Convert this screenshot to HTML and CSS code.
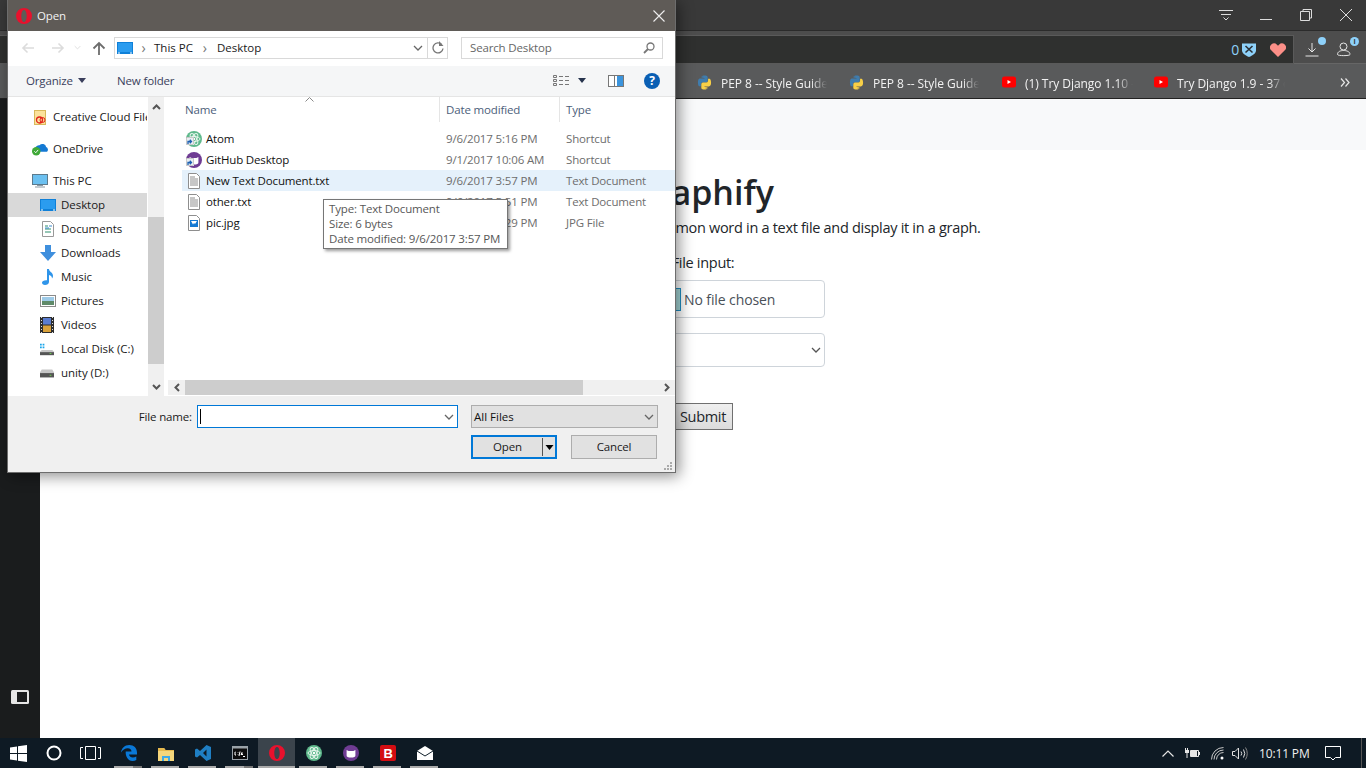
FILE: index.html
```html
<!DOCTYPE html>
<html lang="en">
<head>
<meta charset="utf-8">
<title>Open</title>
<link rel="stylesheet" href="styles.css">
</head>
<body>
<svg class="defs" width="0" height="0" aria-hidden="true">
  <symbol id="opera" viewBox="0 0 16 16"><path fill="#e8112d" fill-rule="evenodd" d="M8 0a8 8 0 1 0 0 16A8 8 0 0 0 8 0zm0 2c1.700 0 2.700 2.700 2.700 6s-1 6-2.700 6-2.700-2.700-2.700-6 1-6 2.700-6z"/></symbol>
  <symbol id="python" viewBox="0 0 16 16"><path fill="#3f7cad" d="M7.900.5C4.800.5 5 1.800 5 1.800v1.500h3v.5H3.300S1 3.500 1 7.900s2 4.200 2 4.200h1.200v-2s-.1-2.100 2-2.100h3.200s2 0 2-1.900V2.500S11.700.5 7.900.5zM6.200 1.500a.6.6 0 1 1 0 1.200.6.6 0 0 1 0-1.200z"/><path fill="#f7cf47" d="M8.100 15.500c3.100 0 2.900-1.300 2.900-1.300v-1.500H8v-.5h4.700S15 12.500 15 8.100s-2-4.200-2-4.200h-1.200v2s.1 2.100-2 2.100H6.600s-2 0-2 1.900v3.600s-.3 2 3.500 2zm1.700-1a.6.6 0 1 1 0-1.200.6.6 0 0 1 0 1.200z"/></symbol>
  <symbol id="yt" viewBox="0 0 14 12"><rect width="14" height="11" y=".5" rx="2.500" fill="#f00"/><path fill="#fff" d="M5.500 4v4L9 6z"/></symbol>
  <symbol id="doc" viewBox="0 0 16 16"><path fill="#fff" stroke="#8e8e8e" d="M2.500.5h8l3 3v12h-11z"/><path stroke="#8e8e8e" d="M4 4h5M4 6h8M4 8h8M4 10h8M4 12h8"/></symbol>
  <symbol id="folder-mon" viewBox="0 0 16 12"><rect width="16" height="12" fill="#0f80d8"/><rect x="1" y="1" width="14" height="9" fill="#2b9cef"/><path fill="#fff" d="M1 10.500h2v1H1zM13 10.500h2v1h-2z"/></symbol>
  <symbol id="shortcut" viewBox="0 0 8 8"><rect width="8" height="8" fill="#fff"/><rect x=".5" y=".5" width="7" height="7" fill="#e9eef2" stroke="#aaa" stroke-width=".6"/><path fill="none" stroke="#1c5fb0" stroke-width="1.300" d="M2 7V4.500h3M3.800 2.800L5.500 4.500 3.800 6.200"/></symbol>
  <symbol id="atom" viewBox="0 0 16 16"><circle cx="8" cy="8" r="8" fill="#5fb98c"/><g fill="none" stroke="#e5f5ec"><ellipse cx="8" cy="8" rx="6" ry="2.500"/><ellipse cx="8" cy="8" rx="6" ry="2.500" transform="rotate(60 8 8)"/><ellipse cx="8" cy="8" rx="6" ry="2.500" transform="rotate(120 8 8)"/></g><circle cx="8" cy="8" r="1.200" fill="#fff"/></symbol>
  <symbol id="ghd" viewBox="0 0 16 16"><circle cx="8" cy="8" r="8" fill="#6f3c93"/><path fill="#fff" d="M3.600 5l2 1h4.800l2-1v5.500c0 1.500-1.500 2-4.400 2s-4.400-.5-4.400-2z"/></symbol>
  <symbol id="chev-d" viewBox="0 0 10 6"><path fill="none" stroke="currentColor" stroke-width="1.300" d="M1 1l4 4 4-4"/></symbol>
  <symbol id="chev-b" viewBox="0 0 8 5"><path fill="currentColor" d="M0 0h8L4 5z"/></symbol>
  <symbol id="arrow-l" viewBox="0 0 14 12"><path fill="none" stroke="currentColor" stroke-width="1.600" d="M13 6H2M6.500 1.500L2 6l4.500 4.500"/></symbol>
  <symbol id="arrow-r" viewBox="0 0 14 12"><path fill="none" stroke="currentColor" stroke-width="1.600" d="M1 6h11M7.500 1.500L12 6l-4.500 4.500"/></symbol>
</svg>

<div class="desktop">
  <div class="browser">
    <header class="chrome">
      <div class="titlebar">
        <svg class="win-ico" width="16" height="12" viewBox="0 0 16 12"><path fill="none" stroke="#ddd" d="M1 1.500h14M3 5.500h10"/><path fill="none" stroke="#ddd" d="M5.500 8.500L8 11l2.500-2.500"/></svg>
        <svg class="win-ico" width="14" height="12" viewBox="0 0 14 12"><path stroke="#ddd" d="M1 10.500h12"/></svg>
        <svg class="win-ico" width="14" height="14" viewBox="0 0 14 14"><path fill="none" stroke="#ddd" d="M1.500 3.500h9v9h-9zM4 3.500v-2h8.500V10h-2"/></svg>
        <svg class="win-ico" width="14" height="14" viewBox="0 0 14 14"><path stroke="#ddd" d="M1 1l12 12M13 1L1 13"/></svg>
      </div>
      <div class="addrrow">
        <div class="addrbox">
          <span class="blocked">0</span>
          <svg width="14" height="15" viewBox="0 0 14 15"><path fill="#8ed1fa" d="M0 1.500h14v7c0 3-3.500 5-7 6.500-3.500-1.500-7-3.500-7-6.500z"/><path stroke="#2a3036" stroke-width="1.600" d="M3.500 4l7 6.500M10.500 4l-7 6.500"/></svg>
          <svg class="heart" width="16" height="14" viewBox="0 0 16 14"><path fill="#fc8f88" d="M8 14L1.200 7.300A4 4 0 0 1 7 1.700L8 2.700l1-1a4 4 0 0 1 5.800 5.600z"/></svg>
        </div>
        <div class="toolbtn">
          <svg width="14" height="15" viewBox="0 0 14 15"><path fill="none" stroke="#e6e6e6" d="M7 1v9M3.500 6.500L7 10l3.500-3.500M.5 14h13"/></svg>
          <span class="dot"></span>
        </div>
        <div class="toolbtn second">
          <svg width="14" height="15" viewBox="0 0 14 15"><g fill="none" stroke="#e6e6e6"><circle cx="6.500" cy="4.500" r="3.500"/><path d="M.5 12.500c0-3 3-4 6-4s6.500 1 6.500 4c0 1.500-12.500 1.500-12.500 0z"/></g></svg>
          <span class="dot info">i</span>
        </div>
      </div>
      <div class="bookmarks">
        <a class="bm bm-pep"><svg width="15" height="15"><use href="#python"/></svg><span class="bm-t">PEP 8 -- Style Guide for Python</span></a>
        <a class="bm bm-pep"><svg width="15" height="15"><use href="#python"/></svg><span class="bm-t">PEP 8 -- Style Guide for Python</span></a>
        <a class="bm bm-yt"><svg width="14" height="12"><use href="#yt"/></svg><span class="bm-t">(1) Try Django 1.10 - 37 of</span></a>
        <a class="bm bm-yt"><svg width="14" height="12"><use href="#yt"/></svg><span class="bm-t">Try Django 1.9 - 37 of 38</span></a>
        <svg class="more" width="10" height="9" viewBox="0 0 10 9"><path fill="none" stroke="#e6e6e6" stroke-width="1.200" d="M1 .5l3.500 4L1 8.500M5.500 .5l3.500 4-3.500 4"/></svg>
      </div>
    </header>
    <div class="browser-body">
      <aside class="side">
        <svg width="18" height="14" viewBox="0 0 18 14"><rect width="18" height="14" rx="1.500" fill="#e6e6e6"/><rect x="6" y="2" width="10" height="10" fill="#1a1c1d"/></svg>
      </aside>
      <main class="page">
        <div class="strip"></div>
        <div class="content">
          <h1 class="title">Graphify</h1>
          <p class="lead">Use this program to find the most common word in a text file and display it in a graph.</p>
          <div class="label">File input:</div>
          <div class="field file"><span class="choose">Choose File</span><span class="nofile">No file chosen</span></div>
          <div class="field select"><svg width="10" height="6"><use href="#chev-d"/></svg></div>
          <span class="submit">Submit</span>
        </div>
      </main>
    </div>
  </div>

  <footer class="taskbar">
    <div class="tb-app sys"><svg width="17" height="17" viewBox="0 0 17 17"><path fill="#fff" d="M0 2.500l7-1v6.500H0zM8 1.300L17 0v8H8zM0 9h7v6.500l-7-1zM8 9h9v8l-9-1.300z"/></svg></div>
    <div class="tb-app sys"><svg width="16" height="16" viewBox="0 0 16 16"><circle cx="8" cy="8" r="6.500" fill="none" stroke="#fff" stroke-width="2"/></svg></div>
    <div class="tb-app sys"><svg width="21" height="14" viewBox="0 0 21 14"><path fill="none" stroke="#fff" d="M5.500.5h10v13h-10zM3 1.500H.5v11H3M18 1.500h2.500v11H18"/></svg></div>
    <div class="tb-app spacer"></div>
    <div class="tb-app"><svg width="16" height="16" viewBox="0 0 16 16"><path fill="#0a78d7" d="M8.300 0C3.500 0 .5 3.500 0 7.500 1.500 5 4 3.300 6.800 3.300c2.300 0 3.700 1.300 3.700 3.200H4.700C4.300 11 7 16 11.500 16c1.500 0 2.700-.3 3.800-.9v-3.600c-3 1.700-6.800 1.200-7.300-1.900h8V7.500C16 3 12.900 0 8.300 0z"/></svg><i class="run split"></i></div>
    <div class="tb-app"><svg width="16" height="15" viewBox="0 0 16 15"><path fill="#f5d67b" d="M0 2h6l1.500 2H16v11H0z"/><path fill="#e6b94e" d="M0 2h6l1.500 2H16v1H0z"/><path fill="#3ea9e8" d="M4 10h8v5h-2v-3H6v3H4z"/></svg><i class="run"></i></div>
    <div class="tb-app"><svg width="16" height="16" viewBox="0 0 16 16"><path fill="#1f7fc4" d="M11.500 0L16 2v12l-4.500 2L5 10l-3 2.500L0 11.500v-7L2 3.500 5 6zM11.500 4.500L8 8l3.500 3.500z"/></svg><i class="run"></i></div>
    <div class="tb-app"><svg width="16" height="14" viewBox="0 0 16 14"><rect width="16" height="14" fill="#9aa2a8"/><rect x="1" y="2.500" width="14" height="10.500" fill="#0c0c0c"/><path fill="none" stroke="#fff" d="M3.500 6H3v3h1M6 6.500v.5M6 8.500V9M8 5.500L7 10M10 8.500v-2l-1 2h2M11 10.500h2"/></svg><i class="run split"></i></div>
    <div class="tb-app active"><svg width="16" height="16"><use href="#opera"/></svg><i class="run"></i></div>
    <div class="tb-app"><svg width="16" height="16"><use href="#atom"/></svg><i class="run"></i></div>
    <div class="tb-app"><svg width="16" height="16"><use href="#ghd"/></svg><i class="run"></i></div>
    <div class="tb-app"><svg width="16" height="16" viewBox="0 0 16 16"><rect width="16" height="16" rx="2" fill="#d40d12"/><text x="8" y="13" class="b-letter" text-anchor="middle">B</text></svg><i class="run"></i></div>
    <div class="tb-app"><svg width="16" height="14" viewBox="0 0 16 14"><path fill="#fff" d="M0 5l8-5 8 5v9H0z"/><path fill="none" stroke="#10202c" d="M0 5l8 5 8-5"/></svg><i class="run"></i></div>
    <div class="tray">
      <svg class="t-chev" width="12" height="7" viewBox="0 0 12 7"><path fill="none" stroke="#e6e6e6" stroke-width="1.200" d="M.5 6.500L6 1l5.500 5.500"/></svg>
      <svg class="t-batt" width="16" height="10" viewBox="0 0 16 10"><path fill="#e6e6e6" d="M1 0h1v2h1V0h1v2h1v3H3.500v5h-1V5H1z"/><path fill="none" stroke="#e6e6e6" d="M6.500 2.500h8v6h-8z"/><rect x="7" y="3" width="6" height="5" fill="#e6e6e6"/><rect x="15" y="4" width="1" height="3" fill="#e6e6e6"/></svg>
      <svg class="t-wifi" width="13" height="13" viewBox="0 0 13 13"><g fill="none" stroke="#c9c9c9"><path d="M.5 12.500a12 12 0 0 1 12-12"/><path d="M3 12.500a9.500 9.500 0 0 1 9.500-9.500"/><path d="M5.500 12.500a7 7 0 0 1 7-7"/></g><circle cx="11" cy="11" r="1.500" fill="#fff"/></svg>
      <svg class="t-vol" width="16" height="13" viewBox="0 0 16 13"><path fill="none" stroke="#e0e0e0" d="M.5 4.500h2.500L6.500 1v11L3 8.500H.5zM9 4.500q1.500 2 0 4M11.500 2.500q2.500 4 0 8"/><path fill="none" stroke="#888" d="M13.500 .5q3.500 6 0 12"/></svg>
      <span class="clock">10:11 PM</span>
      <svg class="notif" width="16" height="15" viewBox="0 0 16 15"><path fill="none" stroke="#fff" d="M.5.500h15v11h-5L8 14l-2.500-2.500h-5z"/></svg>
      <i class="show-desk"></i>
    </div>
  </footer>

  <section class="dialog">
    <div class="dlg-title">
      <svg width="16" height="16"><use href="#opera"/></svg>
      <span class="dlg-name">Open</span>
      <svg class="dlg-close" width="12" height="12" viewBox="0 0 12 12"><path stroke="#eee" stroke-width="1.100" d="M.5.500l11 11M11.500.500l-11 11"/></svg>
    </div>
    <div class="navrow">
      <svg class="nav-a" width="14" height="12"><use href="#arrow-l"/></svg>
      <svg class="nav-b" width="14" height="12"><use href="#arrow-r"/></svg>
      <svg class="nav-c" width="7" height="5"><use href="#chev-d"/></svg>
      <svg class="nav-d" width="14" height="14" viewBox="0 0 14 14"><path fill="none" stroke="#6d6d6d" stroke-width="1.800" d="M7 14V2M1.500 7.500L7 2l5.500 5.500"/></svg>
      <div class="crumbs">
        <svg width="16" height="12"><use href="#folder-mon"/></svg>
        <span class="sep">&rsaquo;</span><span>This PC</span><span class="sep sep-2">&rsaquo;</span><span>Desktop</span>
        <svg class="crumb-dd" width="10" height="6"><use href="#chev-d"/></svg>
        <span class="crumb-ref"><svg width="12" height="13" viewBox="0 0 12 13"><path fill="none" stroke="#777" stroke-width="1.300" d="M9.700 3.500a5 5 0 1 0 1.300 4"/><path fill="#777" d="M7 0v5h4.500z"/></svg></span>
      </div>
      <div class="search">
        <span>Search Desktop</span>
        <svg width="12" height="12" viewBox="0 0 12 12"><circle cx="7.500" cy="4.500" r="3.500" fill="none" stroke="#777" stroke-width="1.300"/><path stroke="#777" stroke-width="1.800" d="M5 7l-4 4"/></svg>
      </div>
    </div>
    <div class="cmdbar">
      <span class="cmd">Organize</span>
      <svg class="cmd-arrow" width="8" height="5"><use href="#chev-b"/></svg>
      <span class="cmd-new">New folder</span>
      <svg class="views" width="16" height="12" viewBox="0 0 16 12"><path fill="none" stroke="#777" d="M.5.500h3v2h-3zM.5 4.500h3v2h-3zM.5 8.500h3v2h-3z"/><path stroke="#777" d="M6 1.500h4M12 1.500h4M6 5.500h4M12 5.500h4M6 9.500h4M12 9.500h4"/></svg>
      <svg class="view-arrow" width="8" height="5"><use href="#chev-b"/></svg>
      <svg class="pane" width="16" height="12" viewBox="0 0 16 12"><rect x=".5" y=".5" width="15" height="11" fill="#fff" stroke="#777"/><rect x="9" y="1" width="6" height="10" fill="#3b94dd"/><path stroke="#777" d="M6.500 0v12"/></svg>
      <span class="help">?</span>
    </div>
    <div class="panes">
      <nav class="tree">
        <div class="tree-list">
          <div class="tree-row top cc"><svg width="12" height="15" viewBox="0 0 12 15"><rect x=".5" y=".5" width="11" height="14" fill="#fbe29c" stroke="#d9b95b"/><circle cx="5.500" cy="10" r="3" fill="none" stroke="#e2231a" stroke-width="1.300"/><circle cx="8.500" cy="10" r="2.500" fill="none" stroke="#e2231a"/></svg><span>Creative Cloud Files</span></div>
          <div class="tree-row top group"><svg width="16" height="14" viewBox="0 0 17 14"><path fill="#1479d3" d="M4 9a4 4 0 0 1 4-6 4 4 0 0 1 7 2 3 3 0 0 1 1 5H5z"/><circle cx="4.500" cy="9.500" r="4.500" fill="#3fa938"/><path fill="none" stroke="#fff" d="M2.500 9.500l1.500 1.500 2.500-3"/></svg><span>OneDrive</span></div>
          <div class="tree-row top group"><svg width="16" height="14" viewBox="0 0 16 14"><rect x=".5" y=".5" width="15" height="10" fill="#6cc0f0" stroke="#5d7a8c"/><path fill="#8b9aa4" d="M5 11h6v1H5zM3 12.500h10v1H3z"/></svg><span>This PC</span></div>
          <div class="tree-row sel"><svg width="16" height="12"><use href="#folder-mon"/></svg><span>Desktop</span></div>
          <div class="tree-row"><svg width="16" height="16" viewBox="0 0 16 16"><path fill="#fff" stroke="#999" d="M2.500.5h8l3 3v12h-11z"/><path stroke="#2f8f6f" d="M5 5h3M5 8h6M5 11h6"/><path stroke="#3d8ad0" d="M9 5h3M5 7h4"/></svg><span>Documents</span></div>
          <div class="tree-row"><svg width="16" height="16" viewBox="0 0 16 16"><path fill="#3f8fdd" d="M5 0h6v7h5l-8 9-8-9h5z"/></svg><span>Downloads</span></div>
          <div class="tree-row"><svg width="16" height="16" viewBox="0 0 16 16"><path fill="#2f95ea" d="M7 0h2c0 3 4 3 4 7 0 1-.5 2-1 2.500 0-2-1-3-3-3.500v7c0 2-2 3-4 3S2 15 2 13.500 4 11 7 11.200z"/></svg><span>Music</span></div>
          <div class="tree-row"><svg width="16" height="12" viewBox="0 0 16 12"><rect x=".5" y=".5" width="15" height="11" fill="#fff" stroke="#8a8a8a"/><rect x="2" y="2" width="12" height="4" fill="#9ecbe8"/><rect x="2" y="6" width="12" height="4" fill="#5f8a69"/></svg><span>Pictures</span></div>
          <div class="tree-row"><svg width="14" height="16" viewBox="0 0 14 16"><rect width="14" height="16" fill="#2d2d2d"/><rect x="3" y="1" width="8" height="6.500" fill="#5a7ccf"/><rect x="3" y="8.500" width="8" height="6.500" fill="#d9a13a"/><path stroke="#ddd" stroke-dasharray="1 2" d="M1.500 0v16M12.500 0v16"/></svg><span>Videos</span></div>
          <div class="tree-row"><svg width="14" height="13" viewBox="0 0 16 13"><path fill="#19a5ea" d="M0 0h2v2H0zM3 0h2v2H3zM0 3h2v2H0zM3 3h2v2H3z"/><path fill="#c6c6c6" d="M2 7h12l2 2v1H0V9z"/><rect y="9.500" width="16" height="3.500" fill="#555"/><rect x="11" y="10.500" width="2" height="1" fill="#6fdc4f"/></svg><span>Local Disk (C:)</span></div>
          <div class="tree-row"><svg width="14" height="9" viewBox="0 0 16 9"><path fill="#c6c6c6" d="M2 0h12l2 3v1H0V3z"/><rect y="4" width="16" height="5" fill="#555"/><rect x="11" y="6" width="2" height="1" fill="#6fdc4f"/></svg><span>unity (D:)</span></div>
        </div>
        <div class="vscroll">
          <svg width="9" height="6" viewBox="0 0 9 6"><path fill="none" stroke="#555" stroke-width="2" d="M1 5l3.500-3.500L8 5"/></svg>
          <div class="vtrack"><div class="vthumb"></div></div>
          <svg width="9" height="6" viewBox="0 0 9 6"><path fill="none" stroke="#555" stroke-width="2" d="M1 1l3.500 3.500L8 1"/></svg>
        </div>
      </nav>
      <div class="files">
        <div class="file-head">
          <svg class="sort" width="9" height="5" viewBox="0 0 9 5"><path fill="none" stroke="#888" d="M.5 4.500l4-4 4 4"/></svg>
          <span class="col-name">Name</span><span class="col-date">Date modified</span><span class="col-type">Type</span>
        </div>
        <div class="file-list">
          <div class="file-row"><span class="col-name ico-wrap"><svg width="16" height="16"><use href="#atom"/></svg><svg class="sc" width="8" height="8"><use href="#shortcut"/></svg>Atom</span><span class="col-date">9/6/2017 5:16 PM</span><span class="col-type">Shortcut</span></div>
          <div class="file-row"><span class="col-name ico-wrap"><svg width="16" height="16"><use href="#ghd"/></svg><svg class="sc" width="8" height="8"><use href="#shortcut"/></svg>GitHub Desktop</span><span class="col-date">9/1/2017 10:06 AM</span><span class="col-type">Shortcut</span></div>
          <div class="file-row selected"><span class="col-name ico-wrap"><svg width="16" height="16"><use href="#doc"/></svg>New Text Document.txt</span><span class="col-date">9/6/2017 3:57 PM</span><span class="col-type">Text Document</span></div>
          <div class="file-row"><span class="col-name ico-wrap"><svg width="16" height="16"><use href="#doc"/></svg>other.txt</span><span class="col-date">9/6/2017 5:51 PM</span><span class="col-type">Text Document</span></div>
          <div class="file-row"><span class="col-name ico-wrap"><svg width="16" height="16" viewBox="0 0 16 16"><path fill="#fff" stroke="#8e8e8e" d="M2.500.5h8l3 3v12h-11z"/><rect x="4" y="5" width="8" height="7" fill="#1479d3"/><path fill="#fff" d="M5 6h6l-2 3-1-1-1 1.500z"/></svg>pic.jpg</span><span class="col-date">9/6/2017 5:29 PM</span><span class="col-type">JPG File</span></div>
        </div>
        <div class="hscroll">
          <svg width="6" height="9" viewBox="0 0 6 9"><path fill="none" stroke="#555" stroke-width="2" d="M5 1L1.500 4.500 5 8"/></svg>
          <div class="hthumb"></div>
          <svg class="h-right" width="6" height="9" viewBox="0 0 6 9"><path fill="none" stroke="#555" stroke-width="2" d="M1 1l3.500 3.500L1 8"/></svg>
        </div>
      </div>
    </div>
    <div class="dlg-foot">
      <div class="foot-row">
        <span class="fname-label">File name:</span>
        <div class="fname"><i class="caret"></i><svg width="10" height="6"><use href="#chev-d"/></svg></div>
        <div class="ftype"><span>All Files</span><svg width="10" height="6"><use href="#chev-d"/></svg></div>
      </div>
      <div class="foot-row btns">
        <div class="btn open"><span class="open-t">Open</span><span class="open-dd"><svg width="9" height="5"><use href="#chev-b"/></svg></span></div>
        <div class="btn"><span class="btn-t">Cancel</span></div>
      </div>
      <svg class="grip" width="8" height="8" viewBox="0 0 8 8"><path fill="#aaa" d="M6 0h2v2H6zM3 3h2v2H3zM6 3h2v2H6zM0 6h2v2H0zM3 6h2v2H3zM6 6h2v2H6z"/></svg>
    </div>
    <div class="tooltip">
      <div>Type: Text Document</div>
      <div>Size: 6 bytes</div>
      <div>Date modified: 9/6/2017 3:57 PM</div>
    </div>
  </section>
</div>
</body>
</html>
```

FILE: styles.css
```css
* { box-sizing: border-box; }
html, body { margin: 0; padding: 0; height: 100%; overflow: hidden; }
body { font-family: "Open Sans", "Noto Sans", sans-serif; font-size: 11.5px; letter-spacing: -.15px; color: #1a1a1a; background: #fff; }
.defs { position: absolute; }
svg { display: block; flex: none; }

.desktop { position: relative; width: 1366px; height: 768px; overflow: hidden; display: flex; flex-direction: column; }
.browser { height: 738px; display: flex; flex-direction: column; }

.chrome { height: 99px; flex: none; display: flex; flex-direction: column; border-bottom: 1px solid #222; }
.titlebar { height: 31px; background: #393939; border-bottom: 1px solid #2b2b2b; display: flex; align-items: center; justify-content: flex-end; padding-right: 13px; gap: 26px; }
.win-ico:first-child { margin-right: -1px; }
.addrrow { height: 33px; background: #4d4d4d; border-bottom: 1px solid #666; display: flex; align-items: flex-start; padding-top: 4px; }
.addrbox { width: 1294px; height: 29px; background: #2f302f; border: 1px solid #5a5a5a; border-left: 0; display: flex; align-items: center; justify-content: flex-end; padding-right: 7px; color: #8ed1fa; }
.blocked { font-size: 14px; margin-right: 3px; }
.heart { margin-left: 14px; }
.toolbtn { position: relative; width: 32px; height: 29px; display: flex; align-items: center; justify-content: center; margin-left: 2px; }
.toolbtn.second { margin-left: 0; }
.dot { position: absolute; right: 2px; top: 2px; width: 8px; height: 8px; border-radius: 50%; background: #8ed1fa; font-size: 7px; line-height: 8px; text-align: center; color: #333; font-weight: 700; }
.info { right: 1px; width: 9px; height: 9px; line-height: 9px; }

.bookmarks { flex: 1; background: #595a5b; display: flex; align-items: center; position: relative; padding: 2px 0 0 696px; color: #f2f2f2; }
.bm { display: flex; align-items: center; flex: none; width: 152px; }
.bm svg { margin-left: 1px; margin-right: 9px; }
.bm-yt svg { margin-left: 2px; margin-right: 9px; }
.bm-t { white-space: nowrap; overflow: hidden; width: 106px; padding-top: 2px; font-size: 12px; letter-spacing: -.05px; -webkit-mask-image: linear-gradient(90deg, #000 85%, transparent); mask-image: linear-gradient(90deg, #000 85%, transparent); }
.bm-yt .bm-t { width: 108px; }
.more { margin-left: 36px; }

.browser-body { flex: 1; display: flex; min-height: 0; }
.side { width: 40px; flex: none; background: #1a1c1d; display: flex; flex-direction: column; justify-content: flex-end; align-items: center; padding-bottom: 34px; }
.page { flex: 1; background: #fff; font-size: 14.5px; letter-spacing: -.3px; color: #212529; }
.strip { height: 51px; background: #f8f9fa; }
.content { display: flex; flex-direction: column; align-items: center; padding-top: 18px; }
.title { margin: 0; font-size: 34px; line-height: 48px; font-weight: 600; letter-spacing: 0; }
.lead { margin: 0; line-height: 24px; }
.label { margin-top: 11px; line-height: 24px; }
.field { width: 244px; border: 1px solid #ced4da; border-radius: 4px; background: #fff; display: flex; align-items: center; }
.file { height: 38px; margin-top: 5px; padding-left: 12px; font-size: 14px; color: #495057; letter-spacing: -.1px; }
.choose { width: 87px; height: 23px; background: #a8dadb; border: 1px solid #1f8fc4; line-height: 21px; text-align: center; font-size: 13px; margin-right: 3px; white-space: nowrap; }
.select { height: 34px; margin-top: 15px; justify-content: flex-end; padding-right: 3px; color: #555; }
.submit { margin-top: 36px; width: 60px; height: 27px; border: 1px solid #707070; background: linear-gradient(#efefef, #dcdcdc); text-align: center; line-height: 25px; }

.taskbar { height: 30px; flex: none; background: #0e1a24; display: flex; color: #fff; }
.tb-app { width: 37px; height: 30px; position: relative; display: flex; align-items: center; justify-content: center; }
.tb-app.sys { width: 36px; }
.tb-app.spacer { width: 2px; }
.tb-app.active { background: #3b444c; }
.run { position: absolute; left: 4px; right: 5px; bottom: 0; height: 2px; background: #ababab; }
.active .run { left: 0; right: 0; }
.run.split { background: linear-gradient(90deg, #ababab 68%, #777 68%); }
.b-letter { font: 700 13px "Liberation Sans", sans-serif; fill: #fff; }
.tray { margin-left: auto; display: flex; align-items: center; }
.t-chev { margin-right: 10px; }
.t-batt { margin-right: 11px; }
.t-wifi { margin-right: 8px; }
.clock { margin-left: 11px; width: 49px; font-size: 12px; color: #f0f0f0; white-space: nowrap; }
.notif { margin-left: 17px; }
.show-desk { width: 5px; height: 30px; margin-left: 20px; border-left: 1px solid #555; }

.dialog { position: absolute; left: 7px; top: 0; width: 669px; height: 473px; border: 1px solid #6d6d6d; border-top: 0; background: #fff; display: flex; flex-direction: column; box-shadow: 3px 3px 14px rgba(0,0,0,.45); }
.dlg-title { height: 31px; flex: none; background: #5f5b57; color: #f3f3f3; display: flex; align-items: center; padding: 0 10px 0 8px; }
.dlg-name { margin-left: 5px; }
.dlg-close { margin-left: auto; }
.navrow { height: 35px; flex: none; display: flex; align-items: center; position: relative; padding-bottom: 2px; }
.nav-a { margin-left: 13px; color: #dcdcdc; }
.nav-b { margin-left: 16px; color: #dcdcdc; }
.nav-c { margin-left: 9px; color: #dcdcdc; }
.nav-d { margin-left: 11px; }
.crumbs { margin-left: 8px; width: 334px; height: 22px; border: 1px solid #d9d9d9; display: flex; align-items: center; padding-left: 2px; letter-spacing: 0; }
.sep { color: #777; width: 21px; text-align: center; font-size: 14px; }
.sep-2 { width: 24px; }
.crumb-dd { margin-left: auto; color: #666; margin-right: 4px; }
.crumb-ref { width: 20px; height: 20px; border-left: 1px solid #d9d9d9; display: flex; align-items: center; justify-content: center; }
.search { margin-left: 13px; width: 202px; height: 22px; border: 1px solid #d9d9d9; display: flex; align-items: center; justify-content: space-between; padding: 0 7px 0 8px; color: #666; }
.cmdbar { height: 31px; flex: none; background: #f5f6f7; border-bottom: 1px solid #e5e5e5; display: flex; align-items: center; color: #3a3f5c; padding-bottom: 1px; }
.cmd { margin-left: 18px; width: 47px; white-space: nowrap; }
.cmd-arrow { margin-left: 5px; color: #3a3f5c; }
.cmd-new { margin-left: 31px; }
.views { margin-left: auto; }
.view-arrow { margin-left: 9px; color: #26334d; }
.pane { margin-left: 22px; }
.help { margin-left: 20px; margin-right: 15px; width: 16px; height: 16px; border-radius: 50%; background: #0a5fb4; color: #fff; text-align: center; font-weight: 700; font-size: 12px; line-height: 16px; }

.panes { height: 299px; flex: none; display: flex; background: #fff; }
.tree { width: 156px; flex: none; display: flex; }
.tree-list { width: 139px; margin-right: 1px; padding-top: 8px; overflow: hidden; letter-spacing: -.05px; }
.tree-row { height: 24px; display: flex; align-items: center; padding-left: 32px; white-space: nowrap; position: relative; }
.tree-row svg { position: absolute; left: 32px; }
.tree-row > span { margin-left: 21px; padding-bottom: 2px; }
.tree-row.top { padding-left: 24px; }
.tree-row.top svg { left: 24px; }
.tree-row.top.cc svg { left: 26px; }
.tree-row.group { margin-top: 8px; }
.tree-row.sel { background: #d9d9d9; }
.vscroll { width: 16px; background: #f0f0f0; display: flex; flex-direction: column; align-items: center; padding: 7px 0 6px; }
.vtrack { flex: 1; width: 100%; margin: 7px 0; padding-top: 100px; }
.vthumb { height: 147px; background: #cdcdcd; }

.files { flex: 1; min-width: 0; display: flex; flex-direction: column; }
.file-head { height: 25px; flex: none; display: flex; align-items: center; position: relative; color: #4c607a; }
.sort { position: absolute; left: 141px; top: 0; }
.col-name { padding-left: 21px; flex: none; }
.col-date { width: 120px; padding-left: 6px; flex: none; color: #6d6d6d; white-space: nowrap; }
.col-type { padding-left: 6px; flex: none; color: #6d6d6d; white-space: nowrap; }
.file-head .col-name { width: 276px; border-right: 1px solid #e5e5e5; height: 100%; line-height: 25px; }
.file-head .col-date { color: #4c607a; border-right: 1px solid #e5e5e5; height: 100%; line-height: 25px; }
.file-head .col-type { color: #4c607a; }
.file-list { flex: 1; padding: 6px 0 0 18px; }
.file-row { height: 21px; display: flex; align-items: center; }
.file-row.selected { background: #e5f1fb; }
.ico-wrap { display: flex; align-items: center; position: relative; width: 258px; padding-left: 4px; white-space: nowrap; color: #111; }
.ico-wrap svg { margin-right: 4px; }
.ico-wrap .sc { position: absolute; left: 4px; bottom: 2px; margin: 0; }
.hscroll { height: 15px; flex: none; margin: 0 0 1px 4px; background: #f0f0f0; display: flex; align-items: center; padding-left: 6px; position: relative; }
.hthumb { width: 398px; height: 15px; background: #cdcdcd; margin-left: 5px; }
.h-right { margin-left: auto; margin-right: 5px; }

.dlg-foot { flex: 1; background: #f0f0f0; position: relative; padding-top: 9px; }
.foot-row { display: flex; align-items: center; height: 23px; }
.fname-label { width: 184px; text-align: right; }
.fname { margin-left: 5px; width: 261px; height: 23px; background: #fff; border: 1px solid #0078d7; display: flex; align-items: center; justify-content: space-between; padding: 0 3px 0 2px; color: #666; }
.caret { width: 1px; height: 15px; background: #000; }
.ftype { margin-left: 13px; width: 187px; height: 23px; background: #e1e1e1; border: 1px solid #adadad; display: flex; align-items: center; justify-content: space-between; padding: 0 3px 0 2px; color: #111; letter-spacing: 0; }
.ftype svg { color: #666; }
.btns { margin-top: 7px; height: 24px; padding-left: 463px; gap: 14px; }
.btn { width: 86px; height: 24px; background: #e1e1e1; border: 1px solid #adadad; display: flex; align-items: center; justify-content: center; }
.btn-t { padding-bottom: 2px; }
.btn.open { border: 2px solid #0078d7; }
.open-t { flex: 1; text-align: center; padding-bottom: 2px; }
.open-dd { width: 13px; height: 18px; border-left: 1px solid #555; display: flex; align-items: center; justify-content: center; color: #000; }
.grip { position: absolute; right: 3px; bottom: 2px; }

.tooltip { position: absolute; left: 315px; top: 199px; width: 185px; height: 50px; background: #fff; border: 1px solid #767676; padding: 1px 5px; color: #575757; line-height: 15px; box-shadow: 2px 2px 3px rgba(0,0,0,.4); white-space: nowrap; }
```
